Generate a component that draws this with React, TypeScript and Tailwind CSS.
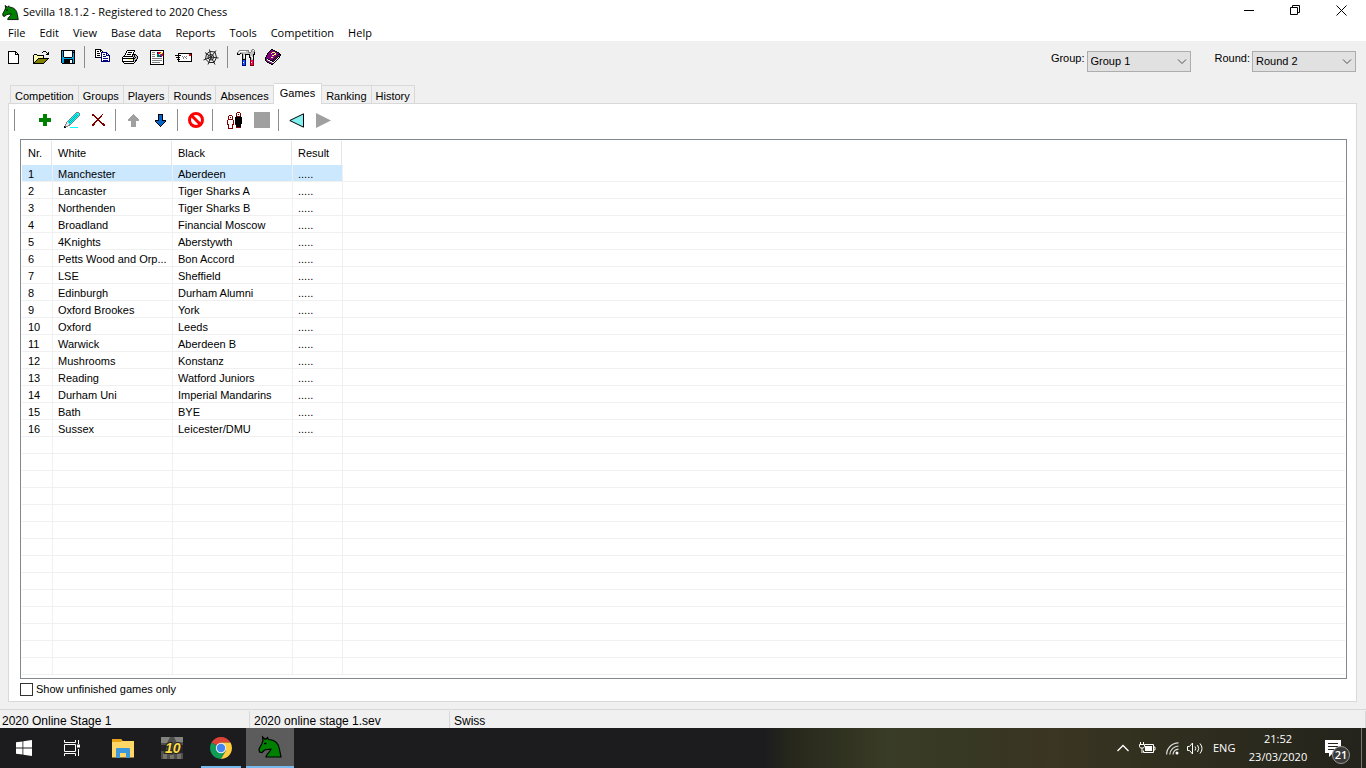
import type { ReactNode } from "react";
import clsx from "clsx";

const colors: Record<string, string> = {
    k: "#000000", w: "#ffffff", g: "#c0c0c0", d: "#808080", y: "#ffff66", o: "#808000",
    b: "#00a2e8", n: "#000080", r: "#ff0000", m: "#800080", c: "#00ffff", l: "#e8e8e8",
    p: "#ff0080", B: "#0066ff", G: "#008000", R: "#800000", a: "#a0a0a0", u: "#0066cc", e: "#00a8a8",
};

const newIcon = [
    "kkkkkkkk...",
    "kwwwwwwkk..",
    "kwwwwwwkwk.",
    "kwwwwwwkkkk",
    "kwwwwwwwwwk",
    "kwwwwwwwwwk",
    "kwwwwwwwwwk",
    "kwwwwwwwwwk",
    "kwwwwwwwwwk",
    "kwwwwwwwwwk",
    "kwwwwwwwwwk",
    "kwwwwwwwwwk",
    "kkkkkkkkkkk",
];
const openIcon = [
    "..........kkk...",
    ".........k...k.k",
    "..............kk",
    ".kkk.........kkk",
    "kywykkkkkkk.....",
    "kwywywywywk.....",
    "kywywywywyk.....",
    "kwywykkkkkkkkkkk",
    "kywykoooooooook.",
    "kwykoooooooook..",
    "kykoooooooook...",
    "kkoooooooook....",
    "kkkkkkkkkkk.....",
];
const saveIcon = [
    "kkkkkkkkkkkkkk",
    "kbkwwwwwwwwkbk",
    "kbkwwwwwwwwkkk",
    "kbkwwwwwwwwkbk",
    "kbkwwwwwwwwkbk",
    "kbkwwwwwwwwkbk",
    "kbkwwwwwwwwkbk",
    "kbbkkkkkkkkbbk",
    "kbbbbbbbbbbbbk",
    "kbbkkkkkkkkkbk",
    "kbbkkkkkkwwkbk",
    "kbbkkkkkkwwkbk",
    "kbbkkkkkkwwkbk",
    ".kkkkkkkkkkkkk",
];
const copyIcon = [
    "kkkkkk.........",
    "kwwwwkk........",
    "kwkkwkwk.......",
    "kwwwwwnnnnnn...",
    "kwkkkwnwwwwnn..",
    "kwwwwwnwnnwnwn.",
    "kwkkkwnwwwwnnnn",
    "kwwwwwnwnnnwwwn",
    "kkkkkknwwwwwwwn",
    "......nwnnnnnwn",
    "......nwwwwwwwn",
    "......nwnnnnnwn",
    "......nnnnnnnnn",
    "...............",
    "...............",
    "...............",
];
const printIcon = [
    ".....kkkkkkkk...",
    "....kwwwwwwwk...",
    "....kwkkkkwk....",
    "...kwwwwwwwk....",
    "...kwkkkkwkkkk..",
    "..kwwwwwwwkgkgk.",
    ".kkkkkkkkkkgkggk",
    "kwwwwwwwwwwkgkgk",
    "kkkkkkkkkkkkkggk",
    "kwwwwwwyyywkggk.",
    "kwwwwwwwwwwkgkk.",
    "kkkkkkkkkkkkgk..",
    ".kwwwwwwwwwwk...",
    "..kkkkkkkkkk....",
];
const reportIcon = [
    "kkkkkkkkkkkkkk",
    "kwwwwwwwwwwwwk",
    "kwdddwwnmrryyk",
    "kwwwwwwnrryypk",
    "kwdddwwBByBrrk",
    "kwwwwwwGGBBrrk",
    "kwdddwwGGBnmwk",
    "kwwwwwwwwwwwwk",
    "kwddddddddddwk",
    "kwwwwwwwwwwwwk",
    "kwddddddddddwk",
    "kwwwwwwwwwwwwk",
    "kwddddddddwwwk",
    "kwwwwwwwwwwwwk",
    "kkkkkkkkkkkkkk",
];
const mailIcon = [
    "...kkkkkkkkkkkkkk",
    "...kwwwwwwwwwwrrk",
    "kkkkkkwwwwwwwwrrk",
    "...kwwwdwdwdwwwwk",
    ".kkkkwwwdwdwwwwwk",
    "...kwwwwdwwdwwwwk",
    "..kkkwwwwwwwwwwwk",
    "...kwwwwwwwwwwwwk",
    "...kkkkkkkkkkkkkk",
];
const toolsIcon = [
    "...............dd.",
    "..dddddddddd..dgwd",
    ".dgwwwwwwggd..dggd",
    "dgwggggggggdddgggk",
    "kggkddgggggggggggk",
    "kkk..kggkkkkkgggkk",
    ".....kgwk...kgggk.",
    ".....kgwk...kgwgk.",
    ".....kgwk...kkgwk.",
    ".....kggk....kgwk.",
    ".....kkkk....kggk.",
    ".....nBBn....RppR.",
    ".....nBBn....RppR.",
    ".....nwBn....RwpR.",
    ".....nBBn....RppR.",
    ".....nBBn....RppR.",
    ".....nnnn....RRRR.",
];
const bookIcon = [
    "......kk........",
    ".....kmmkk......",
    "....kmmmmmkk....",
    "...kmmmyyymmkk..",
    "..kmmmymmmymmmk.",
    "..kmmmmmmyymmkkk",
    ".kmmmmmyymmmkmmk",
    ".kmmmmmmmmmkmkk.",
    "kmmmmmyymmkmkwk.",
    "kmkmmmmmmkmkwk..",
    "kmwkkmmmkmkwk...",
    "kmdwwkkkmkwk....",
    ".kmmdwwkkwk.....",
    "..kkmmdwwk......",
    "....kkmmk.......",
    "......kk........",
];
const plusIcon = [
    "....GGGG....",
    "....GGGG....",
    "....GGGG....",
    "....GGGG....",
    "GGGGGGGGGGGG",
    "GGGGGGGGGGGG",
    "GGGGGGGGGGGG",
    "GGGGGGGGGGGG",
    "....GGGG....",
    "....GGGG....",
    "....GGGG....",
    "....GGGG....",
];
const pencilIcon = [
    "............ddd.",
    "...........dcccd",
    "..........dceccd",
    ".........dcececd",
    "........dcececd.",
    ".......dcececd..",
    "......dcececd...",
    ".....dcececd....",
    "....dcececd.....",
    "...dcececd......",
    "..dlceecd.......",
    "..dllccd........",
    ".dllldd.........",
    ".dlldd..........",
    "kddd............",
    "kk....cccccccc..",
];
const crossIcon = [
    "RR........R..",
    "RRR......R...",
    "..RR....RR...",
    "...RR..RR....",
    "....RRRR.....",
    ".....RR......",
    "....RRRR.....",
    "...RR..RR....",
    "..RR....RR...",
    ".RR......RRR.",
    "RRR.......RRR",
    "RR.........RR",
];
const upIcon = [
    ".....a.....",
    "....aaa....",
    "...aaaaa...",
    "..aaaaaaa..",
    ".aaaaaaaaa.",
    "aaaaaaaaaaa",
    "aaaaaaaaaaa",
    "...aaaaa...",
    "...aaaaa...",
    "...aaaaa...",
    "...aaaaa...",
    "...aaaaa...",
    "...aaaaa...",
];
const downIcon = [
    "...kkkkk...",
    "...kuuuk...",
    "...kuuuk...",
    "...kuuuk...",
    "...kuuuk...",
    "...kuuuk...",
    "kkkkuuukkkk",
    "kuuuuuuuuuk",
    ".kuuuuuuuk.",
    "..kuuuuuk..",
    "...kuuuk...",
    "....kuk....",
    ".....k.....",
];
const playersIcon = [
    "..........RRR..",
    ".........RwwwR.",
    ".........RwRwR.",
    "..RRR....RwwwR.",
    ".RwwwR...kRRRk.",
    ".RwRwR..kkkkkkk",
    ".RwwwR..kkkkkkk",
    ".RRRRR..kkkkkkk",
    "RwwwwwR.kkkkkkk",
    "RwwwwwR.kkkkkkk",
    "RwwwwwR.kkkkkkk",
    "RwwwwwR.kkkkkkk",
    "RRwwwRR.Rkkkkk.",
    ".RwwwR...kkkkk.",
    ".RwwwR...kkkkk.",
    ".RwwwR...RRRRR.",
    ".RRRRR.........",
];

// draws each horizontal run of one colour as a single rect
function PixelIcon({ rows }: { rows: string[] }) {
    const width = rows[0].length;
    return (
        <svg width={width} height={rows.length} viewBox={`0 0 ${width} ${rows.length}`} shapeRendering="crispEdges" aria-hidden="true">
            {rows.flatMap((row, y) =>
                [...row.matchAll(/([^.])\1*/g)].map((run) => (
                    <rect key={`${y}-${run.index}`} x={run.index} y={y} width={run[0].length} height="1" fill={colors[run[1]]} />
                ))
            )}
        </svg>
    );
}

function Knight({ size }: { size: number }) {
    return (
        <svg width={size} height={size} viewBox="0 0 24 24" aria-hidden="true">
            <path
                d="M8 22C8 19 12.500 17 13 14C11 15 8 14 6.500 15L4 17.500L1.500 17L1 14L4 8.500L5 5.500L4.500 2L7.500 4.500L9.500 2.500L10.500 4.500C17 4.500 21 9 21.500 14.500L23 22Z"
                fill="#008000"
                stroke="#000"
                strokeWidth="1.200"
            />
            <path d="M6 8.500h2.500" stroke="#000" strokeWidth="1.500" />
        </svg>
    );
}

function ToolButton({ label, children }: { label: string; children: ReactNode }) {
    return (
        <button aria-label={label} className="flex h-7 w-[27px] shrink-0 items-center justify-center hover:bg-[#d8eaf9]">
            {children}
        </button>
    );
}

function Separator() {
    return <span className="ml-[3px] mr-1 h-[22px] w-px shrink-0 bg-[#8c8c8c]" />;
}

function Picker({ id, label, value }: { id: string; label: string; value: string }) {
    return (
        <div className="flex items-start gap-[2px]">
            <label htmlFor={id} className="leading-[15px]">{label}</label>
            <div className="relative">
                <select id={id} className="block h-[21px] w-[104px] appearance-none border border-[#adadad] bg-[#e1e1e1] pl-[3px]">
                    <option>{value}</option>
                </select>
                <svg className="pointer-events-none absolute right-1 top-2" width="10" height="6" viewBox="0 0 10 6" fill="none" stroke="#505050" aria-hidden="true">
                    <path d="M1 .5L5 4.500L9 .5" />
                </svg>
            </div>
        </div>
    );
}

const menus = ["File", "Edit", "View", "Base data", "Reports", "Tools", "Competition", "Help"];
const tabs = ["Competition", "Groups", "Players", "Rounds", "Absences", "Games", "Ranking", "History"];

const games = [
    ["Manchester", "Aberdeen"],
    ["Lancaster", "Tiger Sharks A"],
    ["Northenden", "Tiger Sharks B"],
    ["Broadland", "Financial Moscow"],
    ["4Knights", "Aberstywth"],
    ["Petts Wood and Orp...", "Bon Accord"],
    ["LSE", "Sheffield"],
    ["Edinburgh", "Durham Alumni"],
    ["Oxford Brookes", "York"],
    ["Oxford", "Leeds"],
    ["Warwick", "Aberdeen B"],
    ["Mushrooms", "Konstanz"],
    ["Reading", "Watford Juniors"],
    ["Durham Uni", "Imperial Mandarins"],
    ["Bath", "BYE"],
    ["Sussex", "Leicester/DMU"],
];
const emptyRows = 14;

function TitleBar() {
    return (
        <header className="flex h-6 items-start justify-between bg-white pr-[2px] font-['Open_Sans',sans-serif]">
            <div className="flex items-center gap-1 pl-[2px] pt-[2px]">
                <Knight size={17} />
                <h1 className="text-[11px] leading-5">Sevilla 18.1.2 - Registered to 2020 Chess</h1>
            </div>
            <div className="flex">
                <button aria-label="Minimize" className="flex h-5 w-[46px] items-center justify-center">
                    <svg width="10" height="10" viewBox="0 0 10 10" stroke="#000"><path d="M0 5.500h10" /></svg>
                </button>
                <button aria-label="Restore" className="flex h-5 w-[46px] items-center justify-center">
                    <svg width="10" height="10" viewBox="0 0 10 10" fill="none" stroke="#000"><path d="M.5 2.500h7v7h-7zM2.500 2.500v-2h7v7h-2" /></svg>
                </button>
                <button aria-label="Close" className="flex h-5 w-[46px] items-center justify-center">
                    <svg width="11" height="11" viewBox="0 0 11 11" stroke="#000"><path d="M.5 .5l10 10M10.500 .5l-10 10" /></svg>
                </button>
            </div>
        </header>
    );
}

function MainToolbar() {
    return (
        <div className="flex h-[42px] items-start justify-between pr-[10px]">
            <div className="flex items-center pt-[2px]">
                <ToolButton label="New"><PixelIcon rows={newIcon} /></ToolButton>
                <ToolButton label="Open"><PixelIcon rows={openIcon} /></ToolButton>
                <ToolButton label="Save"><PixelIcon rows={saveIcon} /></ToolButton>
                <Separator />
                <ToolButton label="Copy"><PixelIcon rows={copyIcon} /></ToolButton>
                <ToolButton label="Print"><PixelIcon rows={printIcon} /></ToolButton>
                <ToolButton label="Report"><PixelIcon rows={reportIcon} /></ToolButton>
                <ToolButton label="Send"><PixelIcon rows={mailIcon} /></ToolButton>
                <ToolButton label="Web">
                    <svg width="16" height="16" viewBox="0 0 16 16" fill="none" stroke="#222" aria-hidden="true">
                        <path d="M8 8L6.500 .5M8 8L13 1.500M8 8L15.500 9M8 8L12 15.500M8 8L5 15.500M8 8L.5 11M8 8L2 3.500" />
                        <path d="M7 2.500L12 3L13.500 8.500L11 13.500L6 13.500L2.500 10L3.500 5zM7.500 5.500L9.800 6L10.800 8.500L9.500 10.800L7 10.800L5 9.200L5.300 6.500z" />
                    </svg>
                </ToolButton>
                <Separator />
                <ToolButton label="Options"><PixelIcon rows={toolsIcon} /></ToolButton>
                <ToolButton label="Help"><PixelIcon rows={bookIcon} /></ToolButton>
            </div>
            <div className="flex gap-6 pt-[10px]">
                <Picker id="group" label="Group:" value="Group 1" />
                <Picker id="round" label="Round:" value="Round 2" />
            </div>
        </div>
    );
}

function Tabs() {
    return (
        <div role="tablist" className="flex h-5 items-end pl-[10px]">
            {tabs.map((tab, i) => {
                const active = tab === "Games";
                return (
                    <button
                        key={tab}
                        role="tab"
                        aria-selected={active}
                        className={clsx(
                            "border-t border-r border-[#d9d9d9]",
                            i === 0 && "border-l",
                            active ? "relative -mb-px h-[21px] bg-white px-[6px] pb-[2px]" : "h-[18px] bg-[#f0f0f0] px-1 pt-[2px]"
                        )}
                    >
                        {tab}
                    </button>
                );
            })}
        </div>
    );
}

function GamesToolbar() {
    return (
        <div className="flex items-center pl-[2px] pt-[2px]">
            <Separator />
            <div className="ml-3 flex items-center">
                <ToolButton label="Add"><PixelIcon rows={plusIcon} /></ToolButton>
                <ToolButton label="Edit"><PixelIcon rows={pencilIcon} /></ToolButton>
                <ToolButton label="Delete"><PixelIcon rows={crossIcon} /></ToolButton>
                <Separator />
                <ToolButton label="Move up"><PixelIcon rows={upIcon} /></ToolButton>
                <ToolButton label="Move down"><PixelIcon rows={downIcon} /></ToolButton>
                <Separator />
                <ToolButton label="Clear">
                    <svg width="16" height="16" viewBox="0 0 16 16" fill="none" stroke="#f00" strokeWidth="3" aria-hidden="true">
                        <circle cx="8" cy="8" r="6.500" />
                        <path d="M3.500 3.500l9 9" />
                    </svg>
                </ToolButton>
                <Separator />
                <div className="ml-1 flex">
                    <ToolButton label="Pairing"><PixelIcon rows={playersIcon} /></ToolButton>
                    <ToolButton label="Stop"><span className="size-4 bg-[#a0a0a0]" /></ToolButton>
                </div>
                <Separator />
                <ToolButton label="Previous round">
                    <svg width="15" height="15" viewBox="0 0 15 15" aria-hidden="true"><path d="M.8 7.500L14.500 .8v13.400z" fill="#80f0f0" stroke="#000" /></svg>
                </ToolButton>
                <ToolButton label="Next round">
                    <svg width="15" height="15" viewBox="0 0 15 15" aria-hidden="true"><path d="M0 0v15L15 7.500z" fill="#a0a0a0" /></svg>
                </ToolButton>
            </div>
        </div>
    );
}

function GamesTable() {
    const cell = "h-[17px] border-r border-b border-[#f0f0f0] pt-[2px] pb-0 pl-[5px] leading-[14px] whitespace-nowrap";
    return (
        <div className="ml-[11px] mr-[9px] mt-[5px] flex flex-1 flex-col border border-[#828790] px-px pb-[3px]">
            <table className="w-full table-fixed border-separate border-spacing-0 text-left">
                <colgroup>
                    <col className="w-[31px]" />
                    <col className="w-[120px]" />
                    <col className="w-[120px]" />
                    <col className="w-[50px]" />
                    <col />
                </colgroup>
                <thead>
                    <tr>
                        {["Nr.", "White", "Black", "Result"].map((title, i) => (
                            <th key={title} className="p-0 pt-px font-normal">
                                <div className={clsx("mr-px h-6 border-r border-[#e5e5e5] leading-6", i === 0 ? "pl-[6px]" : "pl-[5px]")}>{title}</div>
                            </th>
                        ))}
                        <td />
                    </tr>
                </thead>
                <tbody>
                    {games.map(([white, black], i) => (
                        <tr key={white} aria-selected={i === 0}>
                            {[i + 1, white, black, "....."].map((text, col) => (
                                <td key={col} className={clsx(cell, col === 0 && "pl-[6px]", i === 0 && "bg-[#cce8ff]")}>{text}</td>
                            ))}
                            <td className="border-b border-[#f0f0f0]" />
                        </tr>
                    ))}
                    {Array.from({ length: emptyRows }, (_, i) => (
                        <tr key={i}>
                            {[0, 1, 2, 3].map((col) => <td key={col} className={cell} />)}
                            <td className="border-b border-[#f0f0f0]" />
                        </tr>
                    ))}
                </tbody>
            </table>
        </div>
    );
}

function Taskbar() {
    const button = "flex h-10 w-12 items-center justify-center";
    return (
        <footer className="flex h-10 items-center justify-between bg-[linear-gradient(90deg,#1c1c1e_0%,#1c1c1e_56%,#27281b_58%,#393c26_65%,#373724_72%,#3b3523_77%,#31301f_84%,#24231c_100%)] font-['Open_Sans',sans-serif] text-[11px] text-white">
            <div className="flex">
                <button aria-label="Start" className={button}>
                    <svg width="16" height="16" viewBox="0 0 16 16" fill="#fff"><path d="M0 2.300L6.500 1.400V7.600H0zM7.300 1.300L16 0V7.600H7.300zM0 8.400H6.500V14.600L0 13.700zM7.300 8.400H16V16L7.300 14.700z" /></svg>
                </button>
                <button aria-label="Task view" className={button}>
                    <svg width="17" height="16" viewBox="0 0 17 16" fill="none" stroke="#fff"><path d="M.5 0v2.500h11V0M.5 16v-2.500h11V16M.5 4.500h11v7H.5zM14.500 0v4M14.500 9v7" /><path d="M13 4.500h3v3h-3z" fill="#fff" stroke="none" /></svg>
                </button>
                <div className="ml-[3px] flex gap-px">
                    <button aria-label="File Explorer" className={button}>
                        <svg width="22" height="19" viewBox="0 0 22 19">
                            <path d="M0 1q0-1 1-1h8l1.500 2H22v16.500H0z" fill="#ffd766" />
                            <path d="M0 1q0-1 1-1h8l1.500 2-2 1H0z" fill="#e8a317" />
                            <path d="M4 10q0-1 1-1h12q1 0 1 1v9h-4v-5H8v5H4z" fill="#3b98dc" />
                        </svg>
                    </button>
                    <button aria-label="10" className={button}>
                        <svg width="22" height="22" viewBox="0 0 22 22">
                            <path d="M0 0h22v22H0z" fill="#4e4e4c" />
                            <path d="M0 0h9l-3 6H0zM13 0h9v5l-6 1z" fill="#84847e" />
                            <path d="M2 17h4v5H2zM9 18h4v4H9zM16 17h4v5h-4z" fill="#77736a" />
                            <path d="M0 8h5v6H0zM19 8h3v8h-3z" fill="#252525" />
                            <text x="4" y="16" fontSize="14" fontWeight="bold" fontStyle="italic" fontFamily="Liberation Sans" fill="#ffdc46" stroke="#222" strokeWidth="2" paintOrder="stroke">10</text>
                        </svg>
                    </button>
                    <button aria-label="Chrome" className="flex h-10 w-12 flex-col items-center justify-between pt-[9px]">
                        <svg width="22" height="22" viewBox="0 0 22 22">
                            <path d="M11 11L1.500 5.500A11 11 0 0 1 20.500 5.500H11z" fill="#db4437" />
                            <path d="M11 11L1.500 5.500A11 11 0 0 0 11 22L15.800 13.700z" fill="#0f9d58" />
                            <path d="M11 22A11 11 0 0 0 20.500 5.500H11L15.800 13.700z" fill="#ffcd40" />
                            <circle cx="11" cy="11" r="5.200" fill="#f1f1f1" />
                            <circle cx="11" cy="11" r="4.200" fill="#4285f4" />
                        </svg>
                        <span className="h-[2px] w-10 bg-[#76b9ed]" />
                    </button>
                    <button aria-label="Sevilla" className="flex h-10 w-12 flex-col items-center justify-between bg-[#5c5c5d] pt-[7px]">
                        <Knight size={24} />
                        <span className="h-[2px] w-12 bg-[#76b9ed]" />
                    </button>
                </div>
            </div>
            <div className="flex h-10 items-center">
                <button aria-label="Show hidden icons" className="mr-[10px]">
                    <svg width="12" height="8" viewBox="0 0 12 8" fill="none" stroke="#fff" strokeWidth="1.300"><path d="M.5 7L6 1.500L11.500 7" /></svg>
                </button>
                <button aria-label="Battery" className="mr-[10px]">
                    <svg width="17" height="12" viewBox="0 0 17 12" fill="none" stroke="#fff"><path d="M6 2.500h8.500v8H4.500v-2M15 5h1v3h-1M1.500 0v2M4.500 0v2M.5 2.500h5v2l-1 1.500h-3l-1-1.500zM3 6v5" /><path d="M6 4h7v5H6z" fill="#fff" stroke="none" /></svg>
                </button>
                <button aria-label="Network" className="mr-2">
                    <svg width="13" height="13" viewBox="0 0 13 13" fill="none" stroke="#ddd" strokeWidth="1.200"><path d="M.6 12.500A12 12 0 0 1 12.500 .8M3.800 12.500A9 9 0 0 1 12.500 4M7 12.500A6 6 0 0 1 12.500 7.200" /><circle cx="11" cy="11" r="1.500" fill="#fff" stroke="none" /></svg>
                </button>
                <button aria-label="Volume" className="mr-[9px]">
                    <svg width="17" height="13" viewBox="0 0 17 13" fill="none" stroke="#fff"><path d="M.5 4.500h2l3-3.500v11l-3-3.500h-2zM8 4.500q1.500 2 0 4M10.500 3q2.500 3.500 0 7M13 1.500q4 5 0 10" /></svg>
                </button>
                <button className="w-[27px] text-left">ENG</button>
                <button className="w-[76px] text-center leading-[18px]">
                    21:52<br />23/03/2020
                </button>
                <button aria-label="Notifications" className="relative ml-[9px] mr-[11px] flex h-10 w-[25px] items-center">
                    <svg width="16" height="17" viewBox="0 0 16 17"><path d="M0 0h16v13H8l-4 4v-4H0z" fill="#fff" /><path d="M3 3.500h10M3 6.500h10M3 9.500h7" stroke="#24231c" /></svg>
                    <span className="absolute right-0 top-[18px] flex size-[18px] items-center justify-center rounded-full border border-[#999] bg-[#3a3a38] font-semibold">21</span>
                </button>
                <span className="h-10 w-[5px] border-l border-[#77776f]" />
            </div>
        </footer>
    );
}

export default function App() {
    return (
        <div className="flex min-h-screen flex-col bg-[#f0f0f0] font-['Liberation_Sans',Arial,sans-serif] text-[11px] text-black">
            <TitleBar />
            <nav className="flex h-[17px] gap-[14px] bg-white pl-2 font-['Open_Sans',sans-serif] leading-[17px]">
                {menus.map((menu) => <button key={menu}>{menu}</button>)}
            </nav>
            <MainToolbar />
            <Tabs />
            <main className="ml-2 mr-[9px] flex flex-1 flex-col border border-[#d9d9d9] bg-white">
                <GamesToolbar />
                <GamesTable />
                <label className="ml-[11px] flex h-[22px] items-center gap-[3px] pb-[2px]">
                    <input type="checkbox" className="size-[13px] appearance-none border border-[#333] bg-white checked:bg-[#333]" />
                    Show unfinished games only
                </label>
            </main>
            <div className="mt-[7px] flex h-[19px] border-t border-[#d7d7d7] pt-px text-[12px] leading-[20px]">
                <span className="w-[250px] border-r border-[#d7d7d7] pl-[2px]">2020 Online Stage 1</span>
                <span className="w-[200px] border-r border-[#d7d7d7] pl-1">2020 online stage 1.sev</span>
                <span className="flex-1 border-r border-[#d7d7d7] pl-1">Swiss</span>
            </div>
            <Taskbar />
        </div>
    );
}
